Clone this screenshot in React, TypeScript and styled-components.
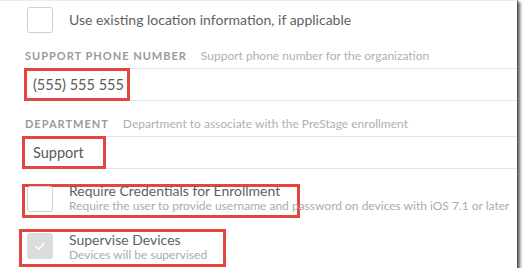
import React from "react";
import styled, { createGlobalStyle } from "styled-components";

const Global = createGlobalStyle`
  html, body { margin: 0; padding: 0; background: #fff; }
  body { font-family: Lato, "Open Sans", sans-serif; }
`;

const Frame = styled.div`
  width: 518px;
  height: 268px;
  box-sizing: border-box;
  background: #fff;
  border-top: 1px solid #ececec;
  border-right: 1px solid #555;
  box-shadow: 2px 2px 3px rgba(0, 0, 0, 0.65);
  padding-left: 25px;
  overflow: hidden;
`;

const CheckRow = styled.div<{ $top: number; $left: number }>`
  display: flex;
  align-items: flex-start;
  gap: 16px;
  margin-top: ${(p) => p.$top}px;
  margin-left: ${(p) => p.$left}px;
`;

const Box = styled.div<{ $checked?: boolean }>`
  width: 26px;
  height: 26px;
  box-sizing: border-box;
  border: 1px solid ${(p) => (p.$checked ? "#dcdcdc" : "#cfcfcf")};
  border-radius: 3px;
  background: ${(p) => (p.$checked ? "#dcdcdc" : "#fff")};
  display: flex;
  align-items: center;
  justify-content: center;
  flex-shrink: 0;
`;

const CheckText = styled.div<{ $shift: number }>`
  display: flex;
  flex-direction: column;
  margin-top: ${(p) => p.$shift}px;
  white-space: nowrap;
`;

const Title = styled.div`
  font-size: 14px;
  color: #5f5f5f;
  line-height: 16px;
  white-space: nowrap;
`;

const Desc = styled.div`
  font-size: 12px;
  color: #ababab;
  line-height: 14px;
`;

const LabelRow = styled.div`
  display: flex;
  align-items: baseline;
  gap: 14px;
  margin-top: 16px;
  line-height: 13px;
`;

const Label = styled.div`
  font-size: 11px;
  font-weight: 700;
  letter-spacing: 1px;
  color: #9a9a9a;
`;

const Hint = styled.div`
  font-size: 12px;
  color: #b0b0b0;
`;

const Input = styled.div`
  display: flex;
  height: 33px;
  margin-top: 6px;
  margin-left: -1px;
  border-top: 1px solid #e3e3ea;
  border-bottom: 1px solid #e3e3ea;
  box-sizing: border-box;
`;

const Mark = styled.div<{ $w: number; $x: number; $top?: number; $h?: number }>`
  width: ${(p) => p.$w}px;
  ${(p) => (p.$h ? `height: ${p.$h}px;` : "")}
  margin-left: ${(p) => p.$x}px;
  margin-top: ${(p) => p.$top ?? 0}px;
  box-sizing: border-box;
  border: 3px solid #e2463f;
`;

const InputMark = styled(Mark)`
  margin-top: -1px;
  margin-bottom: -1px;
`;

const Value = styled.div<{ $pad: number }>`
  display: flex;
  align-items: center;
  height: 100%;
  padding-left: ${(p) => p.$pad}px;
  font-size: 14.5px;
  color: #5a5a5a;
`;

const Check = () => (
  <svg width="12" height="10" viewBox="0 0 12 10">
    <path d="M1.5 5.2 L4.6 8.2 L10.5 1.8" fill="none" stroke="#fff" strokeWidth="1.4" />
  </svg>
);

export default function App() {
  return (
    <>
      <Global />
      <Frame>
        <CheckRow $top={6} $left={2} style={{ alignItems: "center" }}>
          <Box />
          <Title>Use existing location information, if applicable</Title>
        </CheckRow>

        <LabelRow>
          <Label>SUPPORT PHONE NUMBER</Label>
          <Hint>Support phone number for the organization</Hint>
        </LabelRow>
        <Input>
          <InputMark $w={106} $x={0}>
            <Value $pad={6}>(555) 555 555</Value>
          </InputMark>
        </Input>

        <LabelRow>
          <Label>DEPARTMENT</Label>
          <Hint>Department to associate with the PreStage enrollment</Hint>
        </LabelRow>
        <Input>
          <InputMark $w={84} $x={-2}>
            <Value $pad={8}>Support</Value>
          </InputMark>
        </Input>

        <Mark $w={278} $x={-3} $top={15} $h={34}>
          <CheckRow $top={-1} $left={2}>
            <Box />
            <CheckText $shift={-3}>
              <Title>Require Credentials for Enrollment</Title>
              <Desc>Require the user to provide username and password on devices with iOS 7.1 or later</Desc>
            </CheckText>
          </CheckRow>
        </Mark>

        <Mark $w={207} $x={-6} $top={11} $h={38}>
          <CheckRow $top={1} $left={5}>
            <Box $checked>
              <Check />
            </Box>
            <CheckText $shift={-1}>
              <Title>Supervise Devices</Title>
              <Desc>Devices will be supervised</Desc>
            </CheckText>
          </CheckRow>
        </Mark>
      </Frame>
    </>
  );
}
